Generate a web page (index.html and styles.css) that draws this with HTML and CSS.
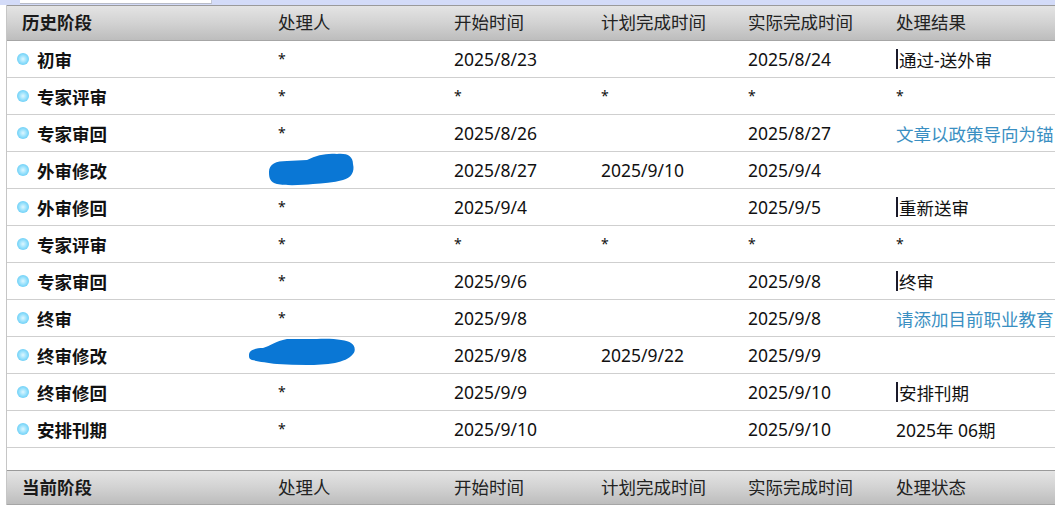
FILE: index.html
```html
<!DOCTYPE html>
<html lang="zh">
<head>
<meta charset="utf-8">
<link rel="stylesheet" href="styles.css">
</head>
<body>
<div class="topbar"><div class="topbox"></div></div>
<div class="panel">
  <div class="grid head">
    <div class="cell first strong">历史阶段</div>
    <div class="cell">处理人</div>
    <div class="cell">开始时间</div>
    <div class="cell">计划完成时间</div>
    <div class="cell">实际完成时间</div>
    <div class="cell">处理结果</div>
  </div>

  <div class="grid row">
    <div class="cell label"><span class="dot"></span>初审</div>
    <div class="cell star">*</div>
    <div class="cell">2025/8/23</div>
    <div class="cell"></div>
    <div class="cell">2025/8/24</div>
    <div class="cell"><span class="bar"></span>通过-送外审</div>
  </div>
  <div class="grid row">
    <div class="cell label"><span class="dot"></span>专家评审</div>
    <div class="cell star">*</div>
    <div class="cell star">*</div>
    <div class="cell star">*</div>
    <div class="cell star">*</div>
    <div class="cell star">*</div>
  </div>
  <div class="grid row">
    <div class="cell label"><span class="dot"></span>专家审回</div>
    <div class="cell star">*</div>
    <div class="cell">2025/8/26</div>
    <div class="cell"></div>
    <div class="cell">2025/8/27</div>
    <div class="cell link">文章以政策导向为锚</div>
  </div>
  <div class="grid row">
    <div class="cell label"><span class="dot"></span>外审修改</div>
    <div class="cell redact">
      <svg class="blob blob1" width="90" height="36" viewBox="0 0 90 36"><path d="M2,20 C2,12 9,9 20,9 L40,8 C50,3 60,1 70,2 C80,1 86,4 86,12 C88,20 84,26 76,28 C66,31 56,31 46,32 C36,33 20,34 10,32 C3,30 2,26 2,20 Z" fill="#0a77d5"/></svg>
    </div>
    <div class="cell">2025/8/27</div>
    <div class="cell">2025/9/10</div>
    <div class="cell">2025/9/4</div>
    <div class="cell"></div>
  </div>
  <div class="grid row">
    <div class="cell label"><span class="dot"></span>外审修回</div>
    <div class="cell star">*</div>
    <div class="cell">2025/9/4</div>
    <div class="cell"></div>
    <div class="cell">2025/9/5</div>
    <div class="cell"><span class="bar"></span>重新送审</div>
  </div>
  <div class="grid row">
    <div class="cell label"><span class="dot"></span>专家评审</div>
    <div class="cell star">*</div>
    <div class="cell star">*</div>
    <div class="cell star">*</div>
    <div class="cell star">*</div>
    <div class="cell star">*</div>
  </div>
  <div class="grid row">
    <div class="cell label"><span class="dot"></span>专家审回</div>
    <div class="cell star">*</div>
    <div class="cell">2025/9/6</div>
    <div class="cell"></div>
    <div class="cell">2025/9/8</div>
    <div class="cell"><span class="bar"></span>终审</div>
  </div>
  <div class="grid row">
    <div class="cell label"><span class="dot"></span>终审</div>
    <div class="cell star">*</div>
    <div class="cell">2025/9/8</div>
    <div class="cell"></div>
    <div class="cell">2025/9/8</div>
    <div class="cell link">请添加目前职业教育</div>
  </div>
  <div class="grid row">
    <div class="cell label"><span class="dot"></span>终审修改</div>
    <div class="cell redact">
      <svg class="blob blob2" width="110" height="32" viewBox="0 0 110 32"><path d="M2,18 C2,13 8,11 16,11 C24,9 28,4 40,2 L70,2 C85,1 100,3 104,6 C108,8 109,14 106,17 C102,22 96,24 88,26 C70,29 50,28 30,27 C20,26 10,24 5,23 C2,22 2,20 2,18 Z" fill="#0a77d5"/></svg>
    </div>
    <div class="cell">2025/9/8</div>
    <div class="cell">2025/9/22</div>
    <div class="cell">2025/9/9</div>
    <div class="cell"></div>
  </div>
  <div class="grid row">
    <div class="cell label"><span class="dot"></span>终审修回</div>
    <div class="cell star">*</div>
    <div class="cell">2025/9/9</div>
    <div class="cell"></div>
    <div class="cell">2025/9/10</div>
    <div class="cell"><span class="bar"></span>安排刊期</div>
  </div>
  <div class="grid row">
    <div class="cell label"><span class="dot"></span>安排刊期</div>
    <div class="cell star">*</div>
    <div class="cell">2025/9/10</div>
    <div class="cell"></div>
    <div class="cell">2025/9/10</div>
    <div class="cell">2025年 06期</div>
  </div>

  <div class="spacer"></div>

  <div class="grid head head2">
    <div class="cell first strong">当前阶段</div>
    <div class="cell">处理人</div>
    <div class="cell">开始时间</div>
    <div class="cell">计划完成时间</div>
    <div class="cell">实际完成时间</div>
    <div class="cell">处理状态</div>
  </div>
</div>
</body>
</html>
```

FILE: styles.css
```css
html, body {
  margin: 0;
  padding: 0;
  background: #ffffff;
  overflow: hidden;
}
body {
  width: 1055px;
  height: 507px;
  font-family: "Noto Sans", "Noto Sans CJK SC", sans-serif;
  font-size: 17.5px;
  color: #111;
}
.topbar {
  height: 5px;
  background: #d3dbf8;
}
.topbox {
  margin-left: 20px;
  width: 191px;
  height: 3px;
  background: #ffffff;
  border-right: 1px solid #c4c8d4;
  border-bottom: 1px solid #b8bcc8;
}
.panel {
  margin-left: 6px;
  border-left: 1px solid #c6c6c6;
  width: 1048px;
  overflow: hidden;
}
.grid {
  display: grid;
  grid-template-columns: 256px 176px 147px 147px 148px 174px;
}
.cell {
  display: flex;
  align-items: center;
  padding-left: 15px;
  white-space: nowrap;
  position: relative;
}
.head {
  height: 34px;
  border-top: 1px solid #9a9a9a;
  border-bottom: 1px solid #a6a6a6;
  background: linear-gradient(#e4e4e4, #d2d2d2 50%, #bdbdbd);
  color: #222;
}
.head .cell {
  line-height: 1;
}
.strong {
  font-weight: bold;
  color: #1a1a1a;
}
.row {
  height: 36px;
  border-bottom: 1px solid #cfcfcf;
}
.label {
  padding-left: 10px;
  font-weight: bold;
}
.dot {
  width: 12px;
  height: 12px;
  border-radius: 50%;
  margin-right: 8px;
  background: radial-gradient(circle at 50% 50%, #dff7ff 0%, #95e0fc 45%, #48bff0 100%);
  flex: none;
}
.star {
  align-items: flex-start;
  padding-top: 11px;
  font-size: 14px;
  line-height: 1;
}
.bar {
  display: inline-block;
  width: 2px;
  height: 20px;
  background: #1a1a2a;
  margin-right: 1px;
  flex: none;
}
.link {
  color: #3a8fc2;
  overflow: hidden;
}
.spacer {
  height: 22px;
}
.head2 {
  height: 33px;
}
.blob {
  position: absolute;
  top: 0;
}
.blob1 {
  left: 4px;
}
.blob2 {
  left: -16px;
}
```
